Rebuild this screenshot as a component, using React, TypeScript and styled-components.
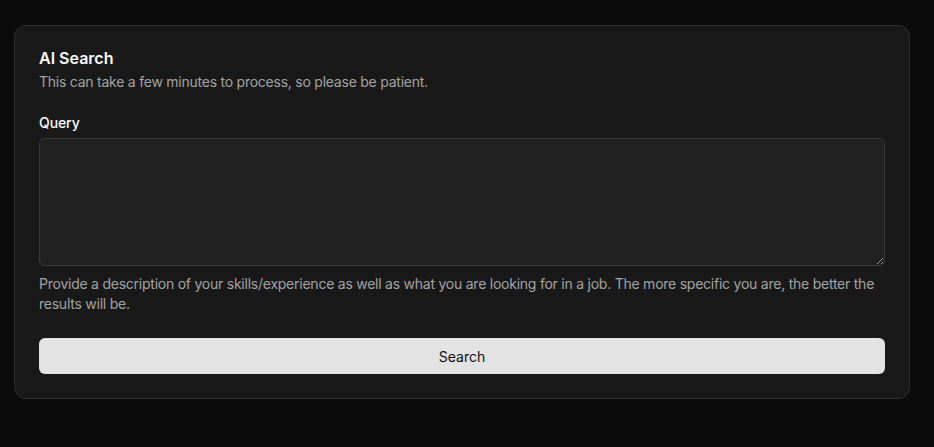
import React from "react";
import styled, { createGlobalStyle } from "styled-components";

const Global = createGlobalStyle`
  html, body { margin: 0; padding: 0; background: #0b0b0b; }
  body { font-family: Inter, "Noto Sans", "Liberation Sans", sans-serif; color: #fafafa; }
  * { box-sizing: border-box; }
`;

const Page = styled.div`
  min-height: 447px;
  padding: 25px 24px 0 14px;
`;

const Card = styled.section`
  background: #191919;
  border: 1px solid #2e2e2e;
  border-radius: 12px;
  padding: 24px;
  display: flex;
  flex-direction: column;
`;

const Header = styled.header`
  display: flex;
  flex-direction: column;
  gap: 6px;
  padding-bottom: 24px;
`;

const Title = styled.h2`
  margin: 0;
  font-size: 16px;
  line-height: 16px;
  font-weight: 600;
  color: #fafafa;
`;

const Muted = styled.p`
  margin: 0;
  font-size: 14px;
  line-height: 20px;
  letter-spacing: -0.24px;
  color: #a3a3a3;
`;

const Field = styled.div`
  display: flex;
  flex-direction: column;
  gap: 8px;
`;

const Label = styled.label`
  font-size: 14px;
  line-height: 14px;
  font-weight: 500;
  letter-spacing: -0.1px;
  color: #fafafa;
`;

const TextArea = styled.textarea`
  height: 128px;
  width: 100%;
  background: #212121;
  border: 1px solid #3a3a3a;
  border-radius: 6px;
  color: #fafafa;
  font-family: inherit;
  font-size: 14px;
  padding: 8px 12px;
  resize: vertical;
  outline: none;
  color-scheme: dark;
`;

const Button = styled.button`
  margin-top: 24px;
  height: 36px;
  width: 100%;
  border: none;
  border-radius: 6px;
  background: #e3e3e3;
  color: #111111;
  font-family: inherit;
  font-size: 14px;
  font-weight: 400;
  cursor: pointer;
`;

export default function App() {
  return (
    <>
      <Global />
      <Page>
        <Card>
          <Header>
            <Title>AI Search</Title>
            <Muted>This can take a few minutes to process, so please be patient.</Muted>
          </Header>
          <Field>
            <Label htmlFor="query">Query</Label>
            <TextArea id="query" />
            <Muted>
              Provide a description of your skills/experience as well as what you are looking for in a job. The more
              specific you are, the better the results will be.
            </Muted>
          </Field>
          <Button>Search</Button>
        </Card>
      </Page>
    </>
  );
}
